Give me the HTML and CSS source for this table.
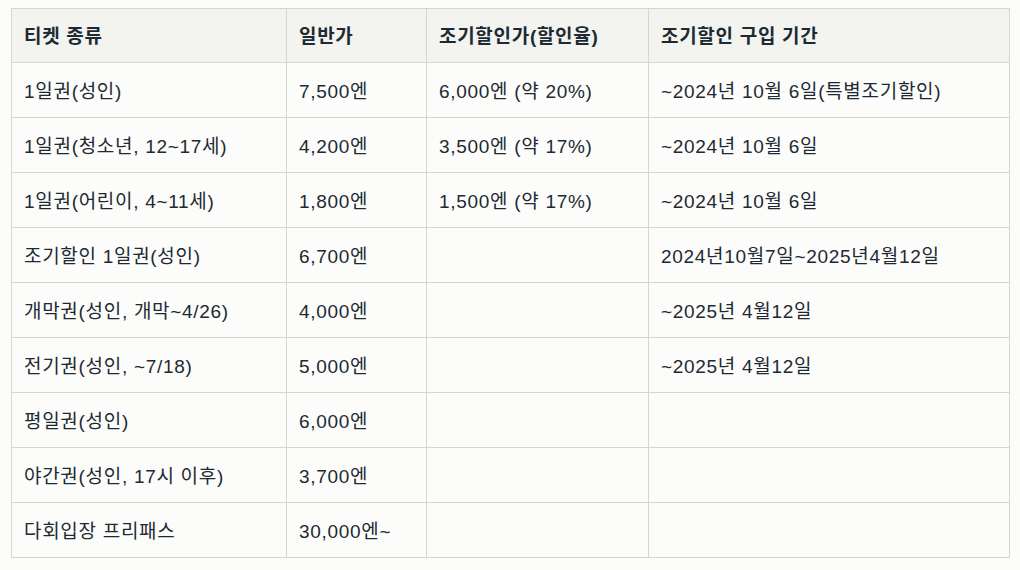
FILE: index.html
```html
<!DOCTYPE html>
<html lang="ko">
<head>
<meta charset="utf-8">
<link rel="stylesheet" href="styles.css">
</head>
<body>
<table class="tickets">
  <colgroup>
    <col class="c1"><col class="c2"><col class="c3"><col class="c4">
  </colgroup>
  <thead>
    <tr><th>티켓 종류</th><th>일반가</th><th>조기할인가(할인율)</th><th>조기할인 구입 기간</th></tr>
  </thead>
  <tbody>
    <tr><td>1일권(성인)</td><td>7,500엔</td><td>6,000엔 (약 20%)</td><td>~2024년 10월 6일(특별조기할인)</td></tr>
    <tr><td>1일권(청소년, 12~17세)</td><td>4,200엔</td><td>3,500엔 (약 17%)</td><td>~2024년 10월 6일</td></tr>
    <tr><td>1일권(어린이, 4~11세)</td><td>1,800엔</td><td>1,500엔 (약 17%)</td><td>~2024년 10월 6일</td></tr>
    <tr><td>조기할인 1일권(성인)</td><td>6,700엔</td><td></td><td>2024년10월7일~2025년4월12일</td></tr>
    <tr><td>개막권(성인, 개막~4/26)</td><td>4,000엔</td><td></td><td>~2025년 4월12일</td></tr>
    <tr><td>전기권(성인, ~7/18)</td><td>5,000엔</td><td></td><td>~2025년 4월12일</td></tr>
    <tr><td>평일권(성인)</td><td>6,000엔</td><td></td><td></td></tr>
    <tr><td>야간권(성인, 17시 이후)</td><td>3,700엔</td><td></td><td></td></tr>
    <tr><td>다회입장 프리패스</td><td>30,000엔~</td><td></td><td></td></tr>
  </tbody>
</table>
</body>
</html>
```
FILE: styles.css
```css
html, body {
  margin: 0;
  background: #fcfcfa;
}
body {
  padding: 8px 11px;
  font-family: "Liberation Sans", "Noto Sans CJK KR", sans-serif;
  font-size: 19px;
  letter-spacing: 0.7px;
  color: #1d2a33;
}
.tickets {
  border-collapse: collapse;
  width: 998px;
  table-layout: fixed;
}
.c1 { width: 275px; }
.c2 { width: 140px; }
.c3 { width: 222px; }
.c4 { width: 361px; }
.tickets th, .tickets td {
  border: 1px solid #d5d5d3;
  height: 55px;
  padding: 0 12px 2px;
  text-align: left;
  vertical-align: middle;
  box-sizing: border-box;
}
.tickets th {
  height: 54px;
  background: #f3f3f0;
  font-weight: bold;
}
```
